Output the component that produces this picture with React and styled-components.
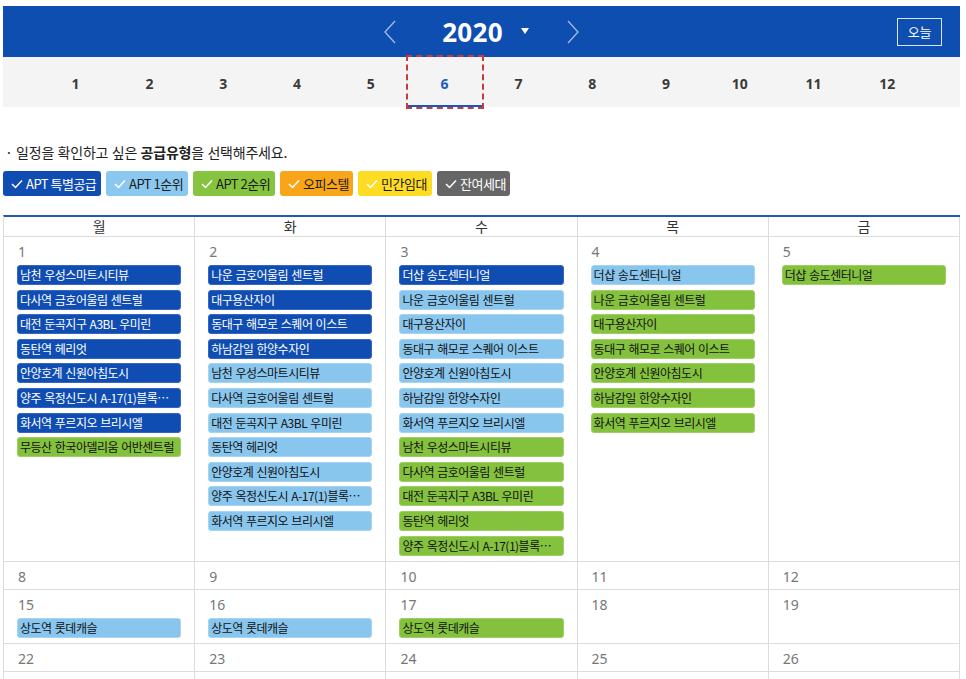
import React from "react";
import styled, { createGlobalStyle } from "styled-components";

const GlobalStyle = createGlobalStyle`
  html, body { margin: 0; padding: 0; background: #fff; }
  body {
    font-family: "Noto Sans CJK KR", "Noto Sans", sans-serif;
    color: #222;
  }
  * { box-sizing: border-box; }
`;

const Page = styled.div`
  width: 957px;
  margin: 6px 0 0 3px;
`;

const TopBar = styled.header`
  height: 51px;
  background: #0e4eb1;
  display: grid;
  grid-template-columns: 1fr auto 1fr;
  align-items: center;
`;

const YearNav = styled.div`
  grid-column: 2;
  display: flex;
  align-items: center;
`;

const NavArrow = styled.button`
  width: 12px;
  height: 24px;
  padding: 0;
  border: 0;
  background: none;
  display: flex;
  cursor: pointer;
  margin: ${(p) => p.$margin};
`;

const Year = styled.span`
  font-family: "Noto Sans", sans-serif;
  font-weight: 700;
  font-size: 26px;
  line-height: 30px;
  color: #fff;
  letter-spacing: 0.3px;
`;

const Caret = styled.span`
  width: 0;
  height: 0;
  margin: 0 38px 2px 18px;
  border-left: 4px solid transparent;
  border-right: 4px solid transparent;
  border-top: 6px solid #fff;
`;

const TodayButton = styled.button`
  grid-column: 3;
  justify-self: end;
  margin-right: 18px;
  width: 45px;
  height: 28px;
  border: 1px solid rgba(255, 255, 255, 0.85);
  background: transparent;
  color: #fff;
  font-family: "Noto Sans CJK KR", sans-serif;
  font-size: 13px;
  letter-spacing: -0.3px;
  padding: 0;
`;

const MonthBar = styled.nav`
  height: 50px;
  background: #f4f4f4;
  display: flex;
  justify-content: center;
  align-items: stretch;
`;

const Month = styled.div`
  width: 73.8px;
  display: flex;
  align-items: center;
  justify-content: center;
  font-family: "Noto Sans", sans-serif;
  font-weight: 700;
  font-size: 14px;
  color: ${(p) => (p.$active ? "#1f5cc4" : "#3a3a3a")};
  padding-top: 3px;
  ${(p) =>
    p.$active &&
    `
    outline: 2px dashed #c83a3a;
    outline-offset: 0px;
    box-shadow: inset 0 -2px 0 #1a56c0;
  `}
`;

const Note = styled.p`
  margin: 35px 0 0 2px;
  font-size: 14px;
  line-height: 20px;
  letter-spacing: -0.2px;
  word-spacing: 0.5px;
  color: #222;
  b { font-weight: 700; }
`;

const Legend = styled.div`
  margin-top: 9px;
  display: flex;
  gap: 5px;
`;

const LegendButton = styled.button`
  width: ${(p) => p.$w}px;
  height: 25px;
  padding: 0 0 0 8px;
  border: 0;
  border-radius: 3px;
  background: ${(p) => p.$bg};
  color: ${(p) => p.$fg};
  display: flex;
  align-items: center;
  gap: 3px;
  font-family: "Noto Sans CJK KR", sans-serif;
  font-size: 13px;
  letter-spacing: -0.5px;
  white-space: nowrap;
  cursor: pointer;
`;

const Calendar = styled.section`
  margin-top: 19px;
  border-top: 2px solid #2357b5;
  border-left: 1px solid #dcdcdc;
`;

const Week = styled.div`
  display: grid;
  grid-template-columns: repeat(5, 1fr);
`;

const DayName = styled.div`
  height: 20px;
  line-height: 19px;
  text-align: center;
  font-size: 14px;
  color: #333;
  border-right: 1px solid #dcdcdc;
  border-bottom: 1px solid #dcdcdc;
`;

const Cell = styled.div`
  min-width: 0;
  padding: 5px 13px 2px 13px;
  border-right: 1px solid #dcdcdc;
  border-bottom: 1px solid #dcdcdc;
`;

const DateNum = styled.div`
  font-family: "Noto Sans", sans-serif;
  font-size: 14px;
  line-height: 20px;
  color: #777;
  padding-left: 1px;
`;

const EventList = styled.div`
  margin: 3px 0 3px;
  display: flex;
  flex-direction: column;
  gap: 4.6px;
`;

const TYPES = {
  special: { bg: "#0f4db3", border: "#3566c2", fg: "#fff" },
  first: { bg: "#89c6ee", border: "#a6d4f2", fg: "#111" },
  second: { bg: "#84c23e", border: "#9dcf64", fg: "#111" },
};

const Event = styled.div`
  height: 20px;
  border: 1px solid ${(p) => TYPES[p.$type].border};
  border-radius: 3px;
  background: ${(p) => TYPES[p.$type].bg};
  color: ${(p) => TYPES[p.$type].fg};
  padding: 0 3px 0 2px;
  font-size: 12px;
  line-height: 18px;
  letter-spacing: -0.5px;
  word-spacing: 1px;
  white-space: nowrap;
  overflow: hidden;
  text-overflow: ellipsis;
`;

const Chevron = ({ dir }) => (
  <svg width="12" height="24" viewBox="0 0 12 24" fill="none">
    <polyline
      points={dir === "left" ? "11,1 1,12 11,23" : "1,1 11,12 1,23"}
      stroke="rgba(255,255,255,0.6)"
      strokeWidth="1.4"
    />
  </svg>
);

const Check = ({ color }) => (
  <svg width="12" height="10" viewBox="0 0 12 10" fill="none">
    <polyline points="1,5 4.5,8.5 11,1.5" stroke={color} strokeWidth="1.5" />
  </svg>
);

const LEGEND = [
  { label: "APT 특별공급", bg: "#0f4db3", fg: "#fff", w: 98 },
  { label: "APT 1순위", bg: "#8bc8ef", fg: "#1a1a1a", w: 82 },
  { label: "APT 2순위", bg: "#85c340", fg: "#1a1a1a", w: 82 },
  { label: "오피스텔", bg: "#f9a51a", fg: "#1a1a1a", w: 73 },
  { label: "민간임대", bg: "#fedc24", fg: "#1a1a1a", w: 74 },
  { label: "잔여세대", bg: "#666666", fg: "#fff", w: 73 },
];

const YJ = "양주 옥정신도시 A-17(1)블록…";

const EVENTS = {
  1: [
    ["남천 우성스마트시티뷰", "special"],
    ["다사역 금호어울림 센트럴", "special"],
    ["대전 둔곡지구 A3BL 우미린", "special"],
    ["동탄역 헤리엇", "special"],
    ["안양호계 신원아침도시", "special"],
    [YJ, "special"],
    ["화서역 푸르지오 브리시엘", "special"],
    ["무등산 한국아델리움 어반센트럴", "second"],
  ],
  2: [
    ["나운 금호어울림 센트럴", "special"],
    ["대구용산자이", "special"],
    ["동대구 해모로 스퀘어 이스트", "special"],
    ["하남감일 한양수자인", "special"],
    ["남천 우성스마트시티뷰", "first"],
    ["다사역 금호어울림 센트럴", "first"],
    ["대전 둔곡지구 A3BL 우미린", "first"],
    ["동탄역 헤리엇", "first"],
    ["안양호계 신원아침도시", "first"],
    [YJ, "first"],
    ["화서역 푸르지오 브리시엘", "first"],
  ],
  3: [
    ["더샵 송도센터니얼", "special"],
    ["나운 금호어울림 센트럴", "first"],
    ["대구용산자이", "first"],
    ["동대구 해모로 스퀘어 이스트", "first"],
    ["안양호계 신원아침도시", "first"],
    ["하남감일 한양수자인", "first"],
    ["화서역 푸르지오 브리시엘", "first"],
    ["남천 우성스마트시티뷰", "second"],
    ["다사역 금호어울림 센트럴", "second"],
    ["대전 둔곡지구 A3BL 우미린", "second"],
    ["동탄역 헤리엇", "second"],
    [YJ, "second"],
  ],
  4: [
    ["더샵 송도센터니얼", "first"],
    ["나운 금호어울림 센트럴", "second"],
    ["대구용산자이", "second"],
    ["동대구 해모로 스퀘어 이스트", "second"],
    ["안양호계 신원아침도시", "second"],
    ["하남감일 한양수자인", "second"],
    ["화서역 푸르지오 브리시엘", "second"],
  ],
  5: [["더샵 송도센터니얼", "second"]],
  15: [["상도역 롯데캐슬", "first"]],
  16: [["상도역 롯데캐슬", "first"]],
  17: [["상도역 롯데캐슬", "second"]],
};

const WEEKS = [
  [1, 2, 3, 4, 5],
  [8, 9, 10, 11, 12],
  [15, 16, 17, 18, 19],
  [22, 23, 24, 25, 26],
  [29, 30, null, null, null],
];

const DAYS = ["월", "화", "수", "목", "금"];

export default function App() {
  return (
    <>
      <GlobalStyle />
      <Page>
        <TopBar>
          <YearNav>
            <NavArrow $margin="0 46px 0 0" aria-label="이전">
              <Chevron dir="left" />
            </NavArrow>
            <Year>2020</Year>
            <Caret />
            <NavArrow $margin="0" aria-label="다음">
              <Chevron dir="right" />
            </NavArrow>
          </YearNav>
          <TodayButton>오늘</TodayButton>
        </TopBar>
        <MonthBar>
          {Array.from({ length: 12 }, (_, i) => (
            <Month key={i} $active={i === 5}>
              {i + 1}
            </Month>
          ))}
        </MonthBar>
        <Note>
          · 일정을 확인하고 싶은 <b>공급유형</b>을 선택해주세요.
        </Note>
        <Legend>
          {LEGEND.map((l) => (
            <LegendButton key={l.label} $bg={l.bg} $fg={l.fg} $w={l.w}>
              <Check color="#fff" />
              {l.label}
            </LegendButton>
          ))}
        </Legend>
        <Calendar>
          <Week>
            {DAYS.map((d) => (
              <DayName key={d}>{d}</DayName>
            ))}
          </Week>
          {WEEKS.map((w, wi) => (
            <Week key={wi}>
              {w.map((d, di) => (
                <Cell key={di}>
                  <DateNum>{d ?? "\u00a0"}</DateNum>
                  {EVENTS[d] ? (
                    <EventList>
                      {EVENTS[d].map(([name, type], ei) => (
                        <Event key={ei} $type={type}>
                          {name}
                        </Event>
                      ))}
                    </EventList>
                  ) : null}
                </Cell>
              ))}
            </Week>
          ))}
        </Calendar>
      </Page>
    </>
  );
}
